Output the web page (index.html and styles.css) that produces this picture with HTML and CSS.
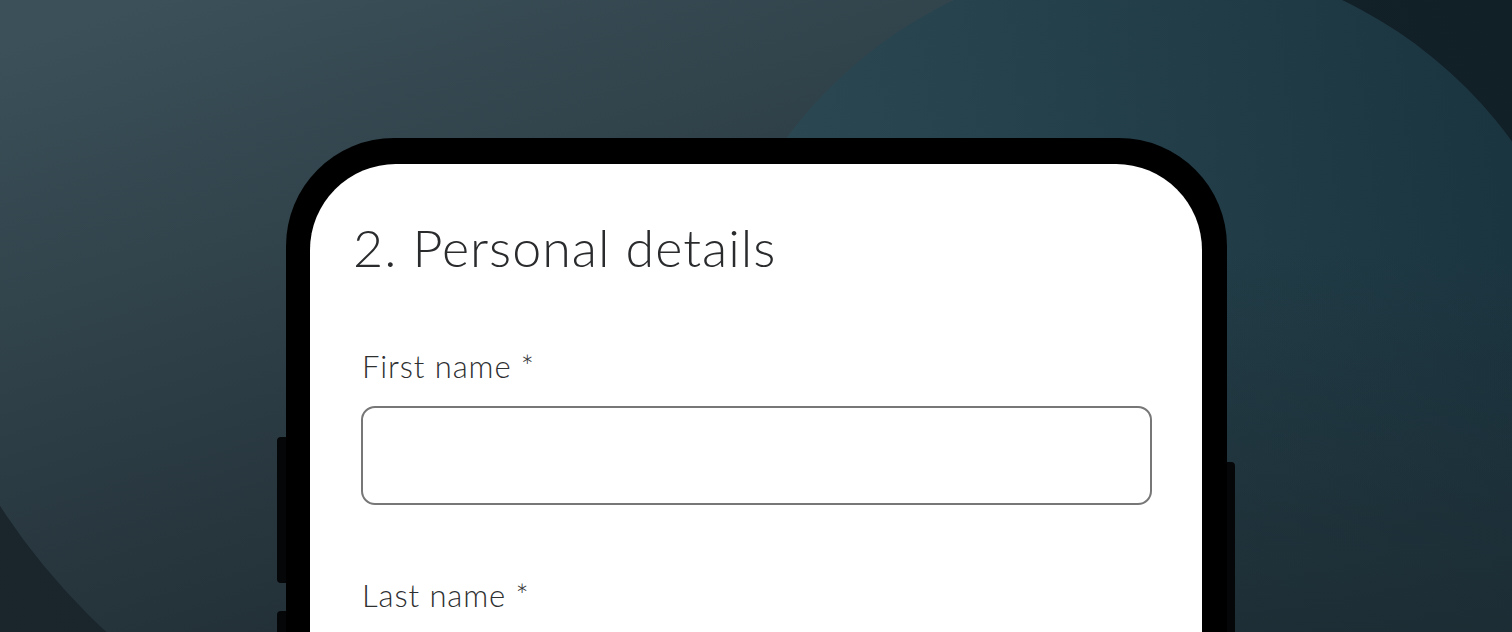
FILE: index.html
```html
<!DOCTYPE html>
<html lang="en">
<head>
<meta charset="utf-8">
<title>Personal details</title>
<link rel="stylesheet" href="styles.css">
</head>
<body>
<div class="stage">
  <svg class="backdrop" width="1512" height="632" viewBox="0 0 1512 632" aria-hidden="true">
    <defs>
      <linearGradient id="bg" gradientUnits="userSpaceOnUse" x1="0" y1="632" x2="1512" y2="0">
        <stop offset="0" stop-color="#1b262c"/>
        <stop offset="1" stop-color="#111f27"/>
      </linearGradient>
      <linearGradient id="leftc" gradientUnits="userSpaceOnUse" x1="150" y1="0" x2="350" y2="632">
        <stop offset="0" stop-color="#3b5059"/>
        <stop offset="1" stop-color="#222f36"/>
      </linearGradient>
      <linearGradient id="rightc" gradientUnits="userSpaceOnUse" x1="780" y1="200" x2="1500" y2="120">
        <stop offset="0" stop-color="#2b4852"/>
        <stop offset="1" stop-color="#1b3540"/>
      </linearGradient>
      <linearGradient id="rightshade" gradientUnits="userSpaceOnUse" x1="0" y1="250" x2="0" y2="632">
        <stop offset="0" stop-color="#1d2b32" stop-opacity="0"/>
        <stop offset="1" stop-color="#1d2b32" stop-opacity="0.85"/>
      </linearGradient>
    </defs>
    <rect x="0" y="0" width="1512" height="632" fill="url(#bg)"/>
    <circle cx="550" cy="150" r="655" fill="url(#leftc)"/>
    <circle cx="1148" cy="406" r="450" fill="url(#rightc)"/>
    <circle cx="1148" cy="406" r="450" fill="url(#rightshade)"/>
  </svg>

  <div class="phone">
    <div class="side side-left">
      <span class="btn btn-l1"></span>
      <span class="btn btn-l2"></span>
    </div>
    <div class="frame">
      <div class="screen">
        <h1 class="title">2. Personal details</h1>
        <form class="form">
          <label class="label" for="first">First name *</label>
          <input class="field" id="first" type="text">
          <label class="label label-last" for="last">Last name *</label>
        </form>
      </div>
    </div>
    <div class="side side-right">
      <span class="btn btn-r1"></span>
    </div>
  </div>
</div>
</body>
</html>
```

FILE: styles.css
```css
html, body {
  margin: 0;
  padding: 0;
  background: #1c272d;
}

.stage {
  display: grid;
  width: 1512px;
  height: 632px;
  overflow: hidden;
}

.backdrop,
.phone {
  grid-area: 1 / 1;
}

.backdrop {
  display: block;
}

.phone {
  align-self: start;
  justify-self: start;
  margin: 138px 0 0 277px;
  display: flex;
  align-items: flex-start;
}

.side {
  display: flex;
  flex-direction: column;
}

.side-left {
  width: 9px;
  padding-top: 299px;
  gap: 28px;
}

.side-right {
  width: 8px;
  padding-top: 324px;
}

.btn {
  display: block;
  background: #050607;
}

.btn-l1 {
  height: 146px;
  border-radius: 4px 0 0 4px;
}

.btn-l2 {
  height: 60px;
  border-radius: 4px 0 0 0;
}

.btn-r1 {
  height: 200px;
  border-radius: 0 4px 0 0;
}

.frame {
  width: 892px;
  height: 520px;
  padding: 26px 25px 0 24px;
  background: #000;
  border-radius: 108px 108px 0 0;
}

.screen {
  height: 100%;
  background: #fff;
  border-radius: 86px 86px 0 0;
  padding: 53px 50px 0 51px;
  box-sizing: border-box;
  font-family: Lato, "Liberation Sans", sans-serif;
}

.title {
  margin: 0 0 71px -8px;
  font-size: 52px;
  line-height: 60px;
  font-weight: 300;
  color: #2a2b2d;
  letter-spacing: 1px;
}

.form {
  display: flex;
  flex-direction: column;
}

.label {
  font-size: 31px;
  line-height: 36px;
  font-weight: 300;
  color: #2e2f31;
  letter-spacing: 0.9px;
  margin: 0 0 22px 1px;
}

.field {
  height: 99px;
  box-sizing: border-box;
  border: 2px solid #777;
  border-radius: 14px;
  background: #fff;
  margin: 0;
  padding: 0 20px;
  font: inherit;
  outline: none;
}

.label-last {
  margin-top: 72px;
}
```
